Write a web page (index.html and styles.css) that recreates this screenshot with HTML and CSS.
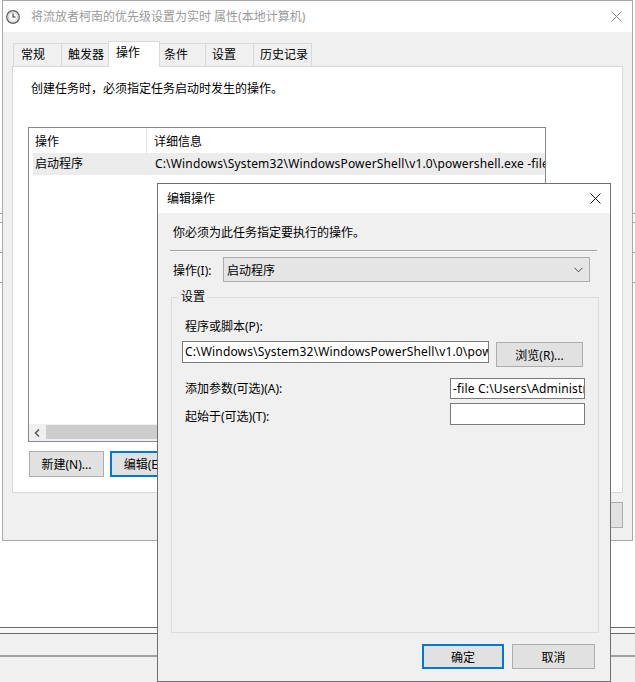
FILE: index.html
```html
<!DOCTYPE html>
<html lang="zh-CN">
<head>
<meta charset="utf-8">
<title>编辑操作</title>
<link rel="stylesheet" href="styles.css">
</head>
<body>
<div class="bg">
  <div class="bg-space h213"></div>
  <div class="bg-line"></div>
  <div class="bg-space h8"></div>
  <div class="bg-line"></div>
  <div class="bg-space h29"></div>
  <div class="bg-line"></div>
  <div class="bg-space h29"></div>
  <div class="bg-line"></div>
  <div class="bg-space h344"></div>
  <div class="bg-line dark"></div>
  <div class="bg-space h5 pale"></div>
  <div class="bg-line dark"></div>
  <div class="bg-space h21 grey"></div>
  <div class="bg-line thick"></div>
  <div class="bg-space rest grey"></div>
</div>

<div class="win main-win">
  <div class="titlebar">
    <svg class="app-icon" width="14" height="14" viewBox="0 0 14 14">
      <circle cx="7" cy="7" r="6.3" fill="#e9e9e9" stroke="#5e5e5e" stroke-width="1.2"/>
      <circle cx="7" cy="7" r="4.6" fill="#fdfdfd" stroke="#b8b8b8" stroke-width="0.6"/>
      <path d="M7 3.6V7H9.6" fill="none" stroke="#333" stroke-width="1.1"/>
    </svg>
    <span class="title-text">将流放者柯南的优先级设置为实时 属性(本地计算机)</span>
    <svg class="close-x grey-x" width="11" height="11" viewBox="0 0 11 11">
      <path d="M0.5 0.5L10.5 10.5M10.5 0.5L0.5 10.5" stroke="#8a8a8a" stroke-width="1"/>
    </svg>
  </div>
  <div class="main-body">
    <div class="tabs">
      <div class="tab t1">常规</div>
      <div class="tab t2">触发器</div>
      <div class="tab t3 selected">操作</div>
      <div class="tab t4">条件</div>
      <div class="tab t5">设置</div>
      <div class="tab t6">历史记录</div>
    </div>
    <div class="panel">
      <p class="intro">创建任务时，必须指定任务启动时发生的操作。</p>
      <div class="list">
        <div class="list-head">
          <div class="hcol1">操作</div>
          <div class="hcol2">详细信息</div>
        </div>
        <div class="list-row">
          <div class="rcol1">启动程序</div>
          <div class="rcol2 latin">C:\Windows\System32\WindowsPowerShell\v1.0\powershell.exe -file C:\Users\Administrator</div>
        </div>
        <div class="list-fill"></div>
        <div class="hscroll">
          <div class="sb-arrow">
            <svg width="7" height="8" viewBox="0 0 7 8"><path d="M5 0.5L1.5 4L5 7.5" fill="none" stroke="#606060" stroke-width="1.6"/></svg>
          </div>
          <div class="sb-thumb"></div>
        </div>
      </div>
      <div class="list-btns">
        <div class="btn">新建(N)...</div>
        <div class="btn default">编辑(E)...</div>
        <div class="btn">删除(D)</div>
      </div>
    </div>
    <div class="main-btns">
      <div class="btn">确定</div>
      <div class="btn">取消</div>
    </div>
  </div>
</div>

<div class="win dlg">
  <div class="dlg-title">
    <span class="dlg-title-text">编辑操作</span>
    <svg class="close-x" width="11" height="11" viewBox="0 0 11 11">
      <path d="M0.5 0.5L10.5 10.5M10.5 0.5L0.5 10.5" stroke="#111" stroke-width="1"/>
    </svg>
  </div>
  <div class="dlg-body">
    <p class="dlg-intro">你必须为此任务指定要执行的操作。</p>
    <div class="sep"></div>
    <div class="action-row">
      <span class="action-label">操作(I):</span>
      <div class="combo">
        <span>启动程序</span>
        <svg width="9" height="6" viewBox="0 0 9 6"><path d="M0.5 0.8L4.5 4.8L8.5 0.8" fill="none" stroke="#444" stroke-width="1"/></svg>
      </div>
    </div>
    <div class="group">
      <div class="legend">设置</div>
      <div class="field-label first">程序或脚本(P):</div>
      <div class="prog-row">
        <div class="textbox wide latin">C:\Windows\System32\WindowsPowerShell\v1.0\powershell.exe</div>
        <div class="btn browse">浏览(R)...</div>
      </div>
      <div class="arg-row">
        <span class="field-label">添加参数(可选)(A):</span>
        <div class="textbox narrow a2 latin">-file C:\Users\Administrator</div>
      </div>
      <div class="arg-row r3">
        <span class="field-label low">起始于(可选)(T):</span>
        <div class="textbox narrow a3"></div>
      </div>
    </div>
    <div class="dlg-btns">
      <div class="btn ok default">确定</div>
      <div class="btn cancel">取消</div>
    </div>
  </div>
</div>
</body>
</html>
```

FILE: styles.css
```css
* { box-sizing: border-box; margin: 0; padding: 0; }
html, body { width: 635px; height: 682px; overflow: hidden; }
body {
  position: relative;
  font-family: "Noto Sans", "Noto Sans CJK SC", sans-serif;
  font-size: 12px;
  color: #000;
  background: #fff;
}
.latin { letter-spacing: 0.16px; }

/* background application behind the windows */
.bg { display: flex; flex-direction: column; height: 682px; }
.bg-space { background: #fff; }
.h213 { height: 213px; }
.h8 { height: 8px; }
.h29 { height: 29px; }
.h344 { height: 344px; }
.h5 { height: 5px; }
.h21 { height: 21px; }
.rest { flex: 1; }
.pale { background: #f7f7f7; }
.grey { background: #f0f0f0; }
.bg-line { height: 1px; background: #a0a0a0; }
.bg-line.dark { background: #6a6a6a; }
.bg-line.thick { height: 2px; background: #a0a0a0; }

/* windows */
.win { position: absolute; background: #f0f0f0; display: flex; flex-direction: column; }
.main-win { left: 2px; top: 0; width: 631px; height: 541px; border: 1px solid #a9a9a9; }
.titlebar {
  height: 31px; background: #fff; display: flex; align-items: center;
}
.app-icon { margin-left: 3px; flex: none; }
.title-text { margin-left: 11px; color: #9a9a9a; line-height: 16px; flex: 1; white-space: nowrap; }
.close-x { flex: none; }
.grey-x { margin-right: 10px; }

.main-body { flex: 1; padding-left: 9px; }
.tabs { display: flex; align-items: flex-end; height: 25px; margin-top: 9px; margin-left: 1px; position: relative; z-index: 1; }
.tab {
  height: 23px; line-height: 22px; padding-left: 6px;
  border: 1px solid #d9d9d9; border-bottom: none; background: #f0f0f0;
  white-space: nowrap;
}
.t1 { width: 49px; padding-left: 7px; }
.t2 { width: 48px; margin-left: -1px; }
.t3 { width: 52px; margin-left: -1px; }
.t4 { width: 49px; margin-left: -3px; }
.t5 { width: 49px; margin-left: -1px; }
.t6 { width: 59px; margin-left: -1px; }
.tab.selected {
  height: 26px; line-height: 21px; background: #fff; margin-bottom: -1px;
  position: relative; z-index: 2; padding-left: 7px;
}

.panel {
  width: 611px; height: 427px; background: #fff; border: 1px solid #d9d9d9;
  padding-left: 15px;
}
.intro { margin-top: 14px; margin-left: 3px; line-height: 16px; }
.list {
  margin-top: 30px; width: 518px; height: 315px; border: 1px solid #828790;
  display: flex; flex-direction: column; overflow: hidden; background: #fff;
}
.list-head { display: flex; height: 25px; flex: none; }
.hcol1 { width: 118px; padding-left: 6px; line-height: 27px; border-right: 1px solid #e5e5e5; }
.hcol2 { padding-left: 7px; line-height: 27px; }
.list-row { display: flex; height: 22px; margin-left: 4px; background: #ececec; flex: none; line-height: 22px; white-space: nowrap; }
.rcol1 { width: 122px; padding-left: 2px; flex: none; }
.rcol2 { white-space: nowrap; }
.list-fill { flex: 1; }
.hscroll { height: 17px; display: flex; background: #f0f0f0; flex: none; }
.sb-arrow { width: 17px; display: flex; align-items: center; justify-content: center; }
.sb-thumb { width: 430px; margin: 1px 0 2px; background: #cdcdcd; }

.list-btns { display: flex; gap: 6px; margin-top: 9px; margin-left: 1px; }
.btn {
  height: 26px; background: #e1e1e1; border: 1px solid #adadad;
  display: flex; align-items: center; justify-content: center; white-space: nowrap;
}
.list-btns .btn { width: 75px; }
.btn.default { border: 2px solid #0078d7; }

.main-btns { display: flex; justify-content: flex-end; gap: 6px; width: 611px; margin-top: 9px; }
.main-btns .btn { width: 76px; }

/* edit dialog */
.dlg { left: 157px; top: 183px; width: 454px; height: 499px; border: 1px solid #6f6f6f; z-index: 5; }
.dlg-title { height: 29px; background: #fff; display: flex; align-items: center; padding: 0 9px; }
.dlg-title-text { flex: 1; line-height: 16px; }
.dlg-body { flex: 1; padding: 0 12px; }
.dlg-intro { margin-top: 12px; margin-left: 3px; line-height: 16px; }
.sep { margin-top: 9px; width: 427px; height: 2px; border-top: 1px solid #a0a0a0; border-bottom: 1px solid #fff; }
.action-row { display: flex; align-items: center; margin-top: 5px; }
.action-label { width: 53px; padding-left: 3px; }
.combo {
  width: 367px; height: 25px; background: #e5e5e5; border: 1px solid #adadad;
  display: flex; align-items: center; justify-content: space-between; padding: 0 6px 0 3px;
}

.group { margin-top: 15px; margin-left: 1px; width: 428px; height: 336px; border: 1px solid #dcdcdc; padding: 0 13px 0 10px; }
.legend { width: fit-content; margin-top: -9px; margin-left: -3px; padding: 0 2px; background: #f0f0f0; line-height: 16px; }
.field-label { line-height: 16px; padding-left: 3px; }
.field-label.first { margin-top: 14px; }
.prog-row { display: flex; align-items: flex-start; gap: 7px; margin-top: 6px; }
.textbox {
  background: #fff; border: 1px solid #7a7a7a; height: 22px; line-height: 20px;
  padding-left: 2px; overflow: hidden; white-space: nowrap;
}
.textbox.wide { width: 307px; }
.browse { width: 87px; margin-top: 1px; height: 25px; }
.arg-row { display: flex; justify-content: space-between; align-items: center; margin-top: 11px; }
.arg-row.r3 { margin-top: 4px; }
.textbox.narrow { width: 135px; }
.textbox.a2 { height: 21px; line-height: 19px; }
.field-label.low { margin-top: 5px; }

.dlg-btns { display: flex; justify-content: flex-end; gap: 8px; margin-top: 11px; padding-right: 3px; }
.dlg-btns .btn { height: 25px; }
.ok { width: 82px; }
.cancel { width: 83px; }
```
